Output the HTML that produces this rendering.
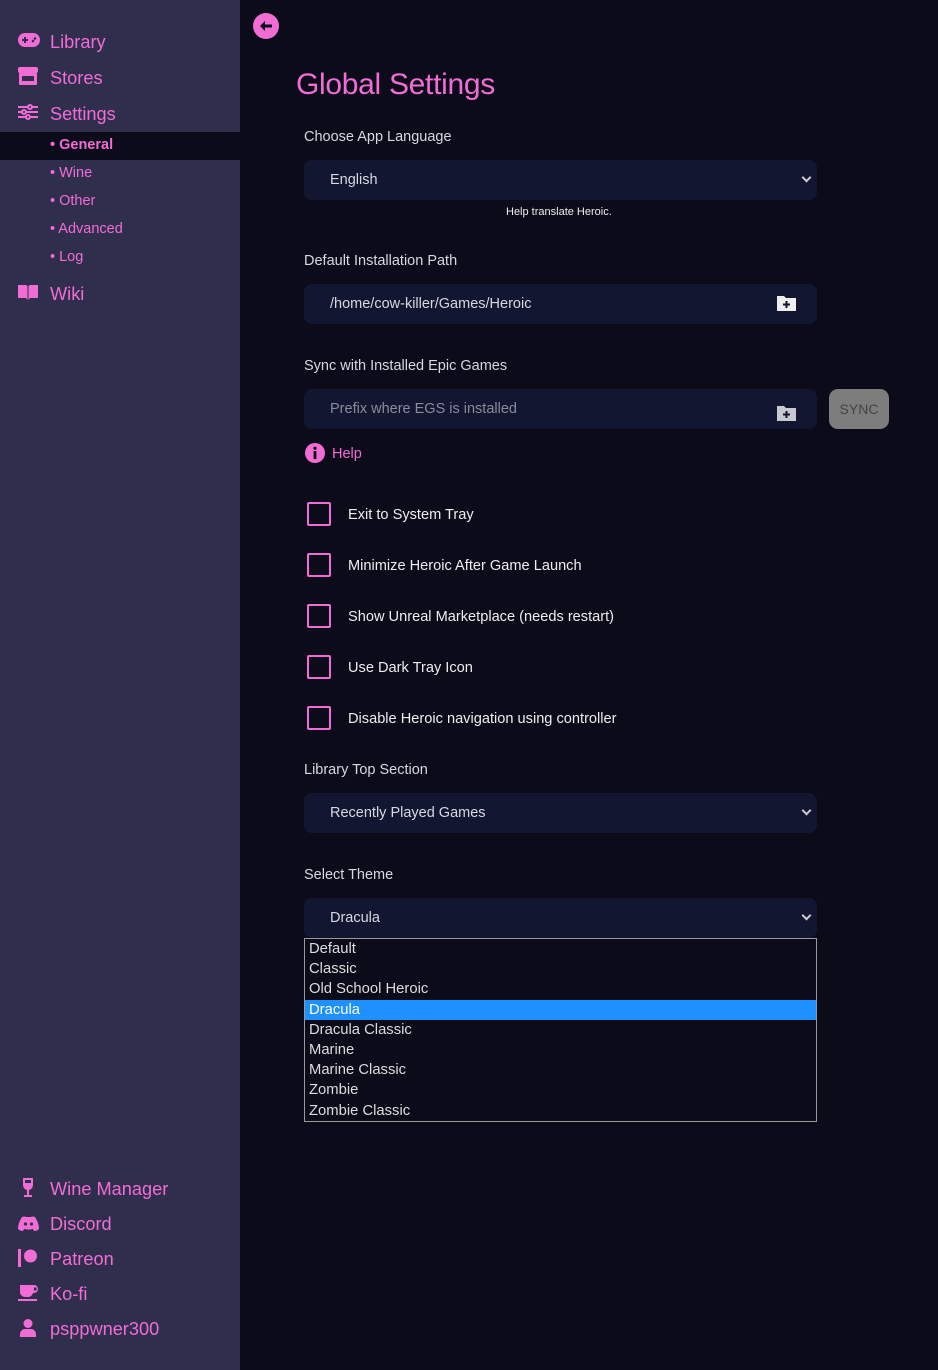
<!DOCTYPE html>
<html><head><meta charset="utf-8"><style>
*{margin:0;padding:0;box-sizing:border-box}
body{width:938px;height:1370px;background:#0b0b1a;font-family:"Liberation Sans",sans-serif;position:relative;overflow:hidden;color:#ddd}
.side{position:absolute;left:0;top:0;width:240px;height:1370px;background:#2f2f4d}
.a{position:absolute;color:#f26cd6;font-size:18.2px;left:50px}
.ic{position:absolute;left:18px;fill:#f26cd6}
.sub{position:absolute;left:50px;color:#f26cd6;font-size:14.5px}
.t{position:absolute;font-size:14.5px;color:#d8d8e0}
.inp{position:absolute;left:304px;width:513px;height:40px;background:#121630;border-radius:8px;font-size:14.5px;color:#d8d8e0;padding:12px 0 0 26px}
.chev{position:absolute;width:7px;height:7px;border-right:2px solid #ccc;border-bottom:2px solid #ccc;transform:rotate(45deg);right:7px;top:14px}
.cb{position:absolute;left:307px;width:24px;height:24px;border:2.5px solid #f26cd6;border-radius:2px}
.cl{position:absolute;left:348px;font-size:14.6px;color:#eee}
.list{position:absolute;left:304px;top:938px;width:513px;height:184px;border:1px solid #999;background:#0b0b1a}
.list div{height:20.2px;font-size:14.8px;padding-left:4px;color:#ddd;line-height:21px}
</style></head><body>
<div class="side">
<svg class="ic" style="top:32px" width="22" height="16" viewBox="0 0 22 16"><rect x="0" y="1" width="22" height="14" rx="7"/><g fill="#2f2f4d"><rect x="4" y="7" width="6" height="2"/><rect x="6" y="5" width="2" height="6"/><circle cx="15" cy="9" r="1.3"/><circle cx="17" cy="6.5" r="1.3"/></g></svg>
<div class="a" style="top:32px">Library</div>
<svg class="ic" style="top:67px" width="20" height="18" viewBox="0 0 20 18"><rect x="0" y="0" width="20" height="6" rx="2"/><rect x="1" y="6" width="18" height="12" rx="1"/><rect x="4" y="9" width="12" height="5" fill="#2f2f4d"/></svg>
<div class="a" style="top:68px">Stores</div>
<svg class="ic" style="top:104px" width="20" height="16" viewBox="0 0 20 16" stroke="#f26cd6" stroke-width="2"><line x1="0" y1="3" x2="20" y2="3"/><line x1="0" y1="8" x2="20" y2="8"/><line x1="0" y1="13" x2="20" y2="13"/><circle cx="12" cy="3" r="2" fill="#2f2f4d"/><circle cx="6" cy="8" r="2" fill="#2f2f4d"/><circle cx="10" cy="13" r="2" fill="#2f2f4d"/></svg>
<div class="a" style="top:104px">Settings</div>
<div style="position:absolute;left:0;top:132px;width:240px;height:28px;background:#0b0b1a"></div>
<div class="sub" style="top:137px;font-weight:bold">• General</div>
<div class="sub" style="top:165px">• Wine</div>
<div class="sub" style="top:193px">• Other</div>
<div class="sub" style="top:221px">• Advanced</div>
<div class="sub" style="top:249px">• Log</div>
<svg class="ic" style="top:284px" width="20" height="16" viewBox="0 0 20 16"><path d="M0 1h8l1.5 1V16L8 14H0z M20 1h-8l-1.5 1V16L12 14h8z"/></svg>
<div class="a" style="top:284px">Wiki</div>
<svg class="ic" style="top:1178px;left:22px" width="12" height="20" viewBox="0 0 12 20"><path d="M1 0h10v7a5 5 0 0 1-4 5v5h3v2H2v-2h3v-5a5 5 0 0 1-4-5z"/><rect x="3" y="2" width="6" height="3" fill="#2f2f4d"/></svg>
<div class="a" style="top:1179px">Wine Manager</div>
<svg class="ic" style="top:1216px" width="21" height="15" viewBox="0 0 21 15"><path d="M4 1Q7 0 8 1h5q1-1 4 0 4 6 4 12-2 2-5 2l-1-2q-4 1-9 0l-1 2q-3 0-5-2 0-6 4-12z"/><circle cx="7.5" cy="8" r="1.6" fill="#2f2f4d"/><circle cx="13.5" cy="8" r="1.6" fill="#2f2f4d"/></svg>
<div class="a" style="top:1214px">Discord</div>
<svg class="ic" style="top:1249px" width="20" height="18" viewBox="0 0 20 18"><rect x="0" y="0" width="3" height="18"/><circle cx="12.5" cy="7" r="6.5"/></svg>
<div class="a" style="top:1249px">Patreon</div>
<svg class="ic" style="top:1284px" width="21" height="18" viewBox="0 0 21 18"><path d="M2 1h14a4 4 0 0 1 0 8h-1a5 5 0 0 1-5 4H7a5 5 0 0 1-5-5z"/><rect x="16" y="3.5" width="2.5" height="3" fill="#2f2f4d"/><rect x="0" y="15" width="19" height="2"/></svg>
<div class="a" style="top:1284px">Ko-fi</div>
<svg class="ic" style="top:1319px;left:20px" width="16" height="18" viewBox="0 0 16 18"><circle cx="8" cy="4.5" r="4.5"/><path d="M0 18v-3a5 5 0 0 1 5-5h6a5 5 0 0 1 5 5v3z"/></svg>
<div class="a" style="top:1319px">psppwner300</div>
</div>

<svg style="position:absolute;left:253px;top:13px" width="26" height="26" viewBox="0 0 26 26"><circle cx="13" cy="13" r="13" fill="#f26cd6"/><path d="M7 13l5-5v3.5h7v3h-7V18z" fill="#0b0b1a"/></svg>
<div style="position:absolute;left:296px;top:68px;font-size:30px;color:#f26cd6;letter-spacing:-0.3px">Global Settings</div>

<div class="t" style="left:304px;top:129px">Choose App Language</div>
<div class="inp" style="top:160px">English<div class="chev"></div></div>
<div style="position:absolute;left:506px;top:206px;font-size:11px;color:#eee">Help translate Heroic.</div>

<div class="t" style="left:304px;top:253px">Default Installation Path</div>
<div class="inp" style="top:284px">/home/cow-killer/Games/Heroic
<svg style="position:absolute;left:473px;top:11px" width="19" height="16" viewBox="0 0 19 16"><path d="M0 1h7l2 2h10v13H0z" fill="#eee"/><path d="M9.5 6v7M6 9.5h7" stroke="#121630" stroke-width="2"/></svg></div>

<div class="t" style="left:304px;top:358px">Sync with Installed Epic Games</div>
<div class="inp" style="top:389px;color:#8a8a9a">Prefix where EGS is installed
<svg style="position:absolute;left:473px;top:16px" width="19" height="16" viewBox="0 0 19 16"><path d="M0 1h7l2 2h10v13H0z" fill="#c8c8d0"/><path d="M9.5 6v7M6 9.5h7" stroke="#121630" stroke-width="2"/></svg></div>
<div style="position:absolute;left:829px;top:389px;width:60px;height:40px;background:#7d7d7d;border-radius:9px;color:#444;font-size:14px;text-align:center;line-height:40px">SYNC</div>

<svg style="position:absolute;left:305px;top:443px" width="20" height="20" viewBox="0 0 20 20"><circle cx="10" cy="10" r="10" fill="#f26cd6"/><rect x="8.6" y="8" width="2.8" height="8" fill="#0b0b1a"/><circle cx="10" cy="5.2" r="1.6" fill="#0b0b1a"/></svg>
<div style="position:absolute;left:332px;top:446px;font-size:14.5px;color:#f26cd6">Help</div>

<div class="cb" style="top:502px"></div><div class="cl" style="top:507px">Exit to System Tray</div>
<div class="cb" style="top:553px"></div><div class="cl" style="top:558px">Minimize Heroic After Game Launch</div>
<div class="cb" style="top:604px"></div><div class="cl" style="top:609px">Show Unreal Marketplace (needs restart)</div>
<div class="cb" style="top:655px"></div><div class="cl" style="top:660px">Use Dark Tray Icon</div>
<div class="cb" style="top:706px"></div><div class="cl" style="top:711px">Disable Heroic navigation using controller</div>

<div class="t" style="left:304px;top:762px">Library Top Section</div>
<div class="inp" style="top:793px">Recently Played Games<div class="chev"></div></div>

<div class="t" style="left:304px;top:867px">Select Theme</div>
<div class="inp" style="top:898px">Dracula<div class="chev"></div></div>
<div class="list">
<div>Default</div><div>Classic</div><div>Old School Heroic</div>
<div style="background:#1e90ff;color:#fff">Dracula</div>
<div>Dracula Classic</div><div>Marine</div><div>Marine Classic</div><div>Zombie</div><div>Zombie Classic</div>
</div>
</body></html>
